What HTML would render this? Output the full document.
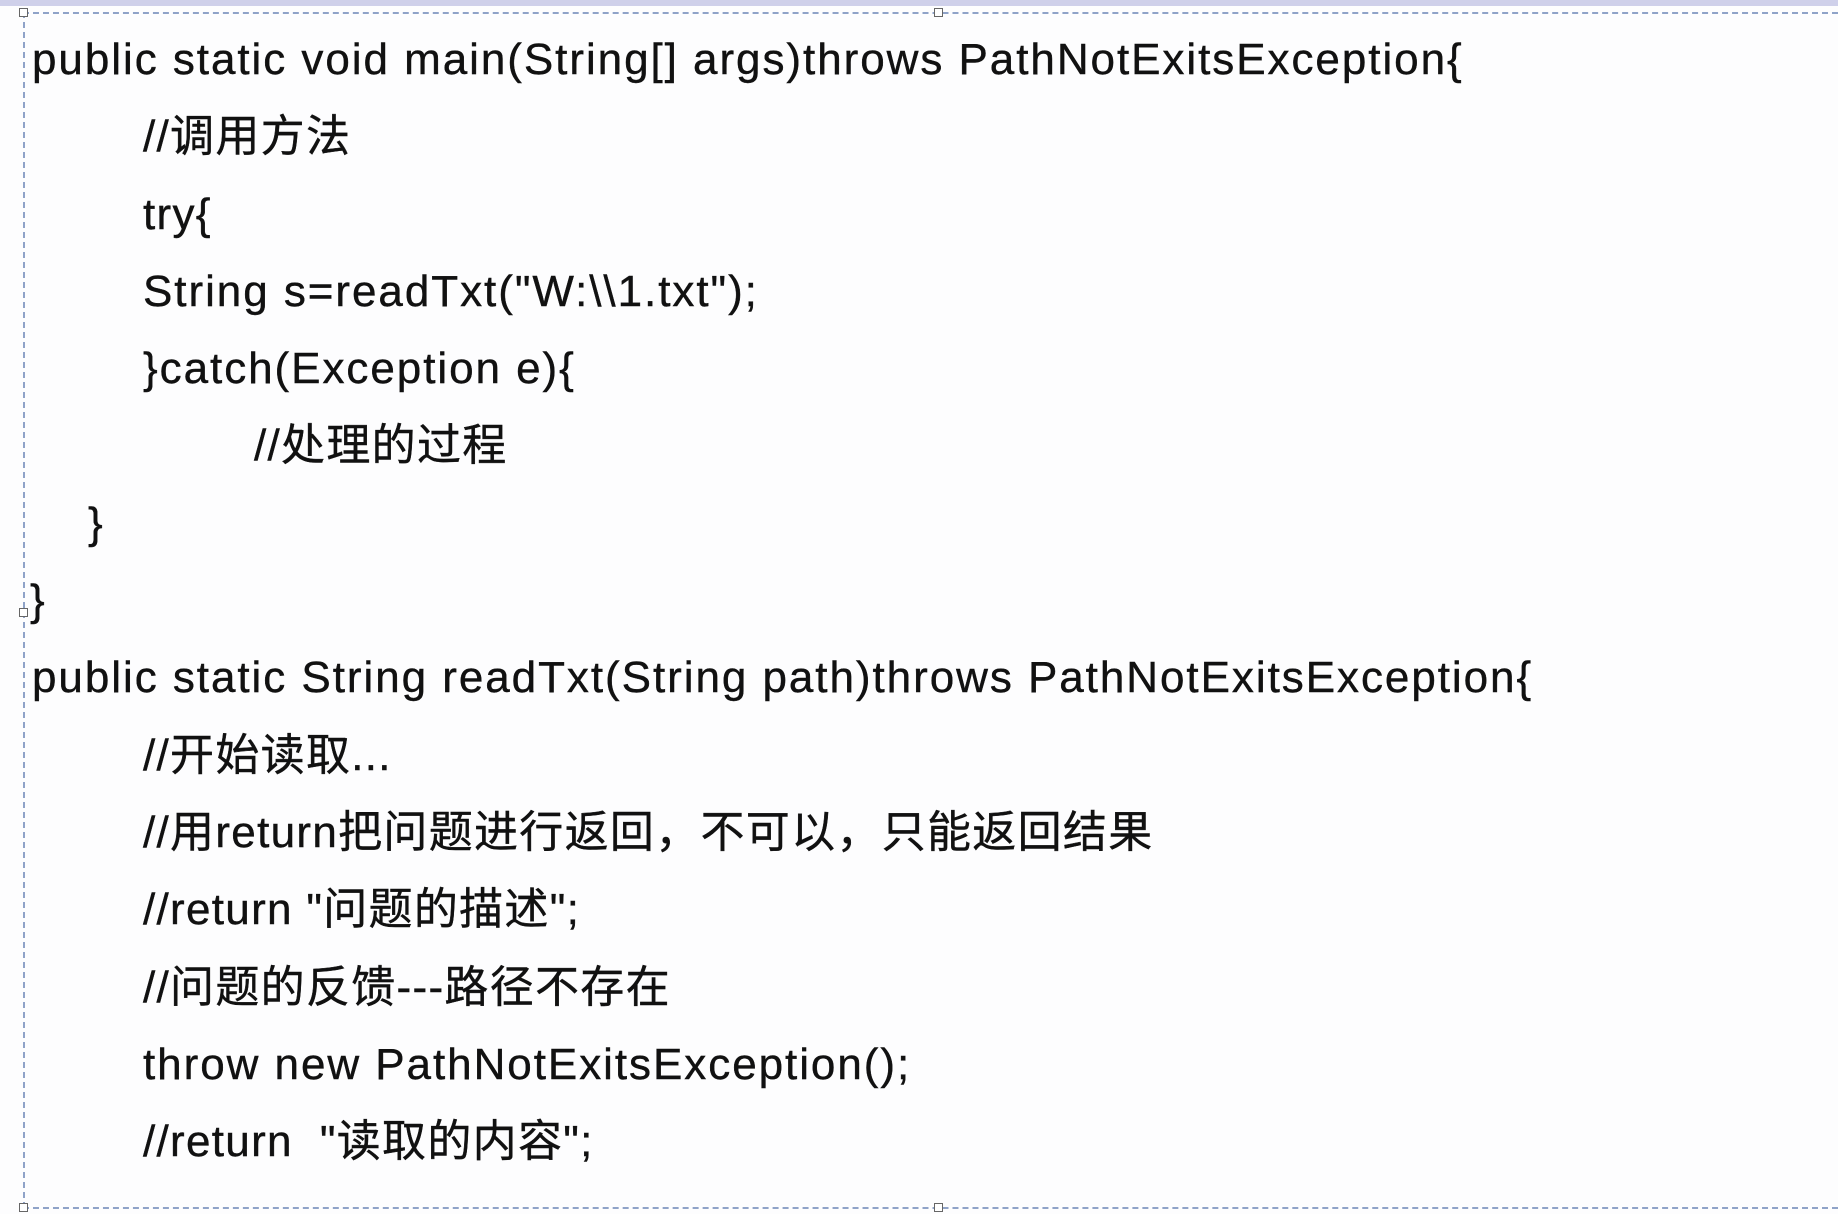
<!DOCTYPE html>
<html><head><meta charset="utf-8"><style>
html,body{margin:0;padding:0;width:1838px;height:1214px;overflow:hidden;background:#fdfdfe;}
.top{position:absolute;left:0;top:0;width:1838px;height:6px;background:#cfd0ea;}
.hl{position:absolute;left:23px;width:1815px;height:0;border-top:2px dashed #8fa3c8;}
.vl{position:absolute;left:23px;top:12px;height:1196px;width:0;border-left:2px dashed #8fa3c8;}
.h{position:absolute;width:7px;height:7px;border:1px solid #666;background:#fff;}
.t{position:absolute;left:0;top:21px;font-family:"Liberation Sans","Noto Sans CJK SC",sans-serif;font-size:44px;letter-spacing:1.3px;line-height:77.3px;color:#111;-webkit-text-stroke:0.4px #111;}
.t div{height:77.3px;white-space:pre;}
.t .w{letter-spacing:1.95px}
</style></head><body>
<div class="top"></div>
<div class="hl" style="top:12px"></div>
<div class="hl" style="top:1207px"></div>
<div class="vl"></div>
<div class="h" style="left:19px;top:8px"></div>
<div class="h" style="left:934px;top:8px"></div>
<div class="h" style="left:19px;top:1203px"></div>
<div class="h" style="left:934px;top:1203px"></div>
<div class="h" style="left:19px;top:608px"></div>
<div class="t"><div class="w" style="padding-left:32px">public static void main(String[] args)throws PathNotExitsException{</div><div style="padding-left:143px">//调用方法</div><div style="padding-left:143px">try{</div><div class="w" style="padding-left:143px">String s=readTxt("W:\\1.txt");</div><div class="w" style="padding-left:143px">}catch(Exception e){</div><div style="padding-left:254px">//处理的过程</div><div style="padding-left:88px">}</div><div style="padding-left:30px">}</div><div class="w" style="padding-left:32px">public static String readTxt(String path)throws PathNotExitsException{</div><div style="padding-left:143px">//开始读取...</div><div style="padding-left:143px">//用return把问题进行返回，不可以，只能返回结果</div><div style="padding-left:143px">//return "问题的描述";</div><div style="padding-left:143px">//问题的反馈---路径不存在</div><div class="w" style="padding-left:143px">throw new PathNotExitsException();</div><div style="padding-left:143px">//return  "读取的内容";</div></div>
</body></html>
